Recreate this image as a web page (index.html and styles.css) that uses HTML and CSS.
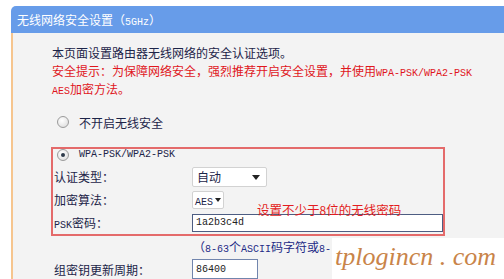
FILE: index.html
```html
<!DOCTYPE html>
<html lang="zh-CN">
<head>
  <meta charset="UTF-8">
  <title>无线网络安全设置</title>
  <link rel="stylesheet" href="styles.css">
</head>
<body>
  <div class="panel">
    <div class="panel-head">无线网络安全设置（<span class="en">5GHz</span>）</div>
    <div class="panel-body">
      <p class="intro">本页面设置路由器无线网络的安全认证选项。</p>
      <p class="warn">安全提示：为保障网络安全，强烈推荐开启安全设置，并使用<span class="en">WPA-PSK/WPA2-PSK</span><br><span class="en">AES</span>加密方法。</p>

      <div class="radio-row first"><span class="radio"></span>不开启无线安全</div>

      <div class="mark-box">
        <div class="radio-row"><span class="radio checked"></span><span class="en">WPA-PSK/WPA2-PSK</span></div>
        <div class="field">
          <span class="field-label">认证类型：</span>
          <span class="select wide">自动</span>
        </div>
        <div class="field">
          <span class="field-label">加密算法：</span>
          <span class="select narrow"><span class="en">AES</span></span>
        </div>
        <div class="field">
          <span class="field-label"><span class="en">PSK</span>密码：</span>
          <input class="text-input psk" type="text" value="1a2b3c4d">
        </div>
        <div class="note">设置不少于<span class="num">8</span>位的无线密码</div>
      </div>

      <div class="hint">（<span class="en">8-63</span>个<span class="en">ASCII</span>码字符或<span class="en">8-</span></div>
      <div class="field outer">
        <span class="field-label">组密钥更新周期：</span>
        <input class="text-input period" type="text" value="86400">
      </div>
    </div>
  </div>

  <div class="watermark">tplogincn . com</div>
</body>
</html>
```

FILE: styles.css
```css
html, body {
  margin: 0;
  padding: 0;
  background: #fff;
  overflow: hidden;
}

body {
  width: 504px;
  height: 279px;
  position: relative;
  font-family: "Noto Sans CJK SC", sans-serif;
  font-size: 12px;
  color: #1c2448;
}

.en {
  font-family: "Liberation Mono", monospace;
  font-size: 10px;
  line-height: 0;
}

.panel {
  margin: 6px 0 0 11px;
  width: 493px;
  height: 273px;
  overflow: hidden;
}

.panel-head {
  height: 27px;
  line-height: 27px;
  padding-left: 6px;
  background: #679ce9;
  color: #fff;
  border-radius: 5px 0 0 0;
}

.panel-body {
  background: #f3f3f3;
  border-left: 2px solid #f6c58e;
  padding: 11px 0 30px 39px;
  height: 300px;
}

.intro, .warn {
  margin: 0;
  line-height: 18px;
}

.warn {
  color: #e0161c;
}

.radio-row {
  display: flex;
  align-items: center;
  height: 12px;
  padding-left: 5px;
}

.radio-row.first {
  height: 18px;
  margin-top: 15px;
}

.radio {
  width: 10px;
  height: 10px;
  border: 1px solid #9b9b9b;
  border-radius: 50%;
  background: radial-gradient(circle at 40% 35%, #fff 0, #e4e4e4 70%, #cfcfcf 100%);
  margin-right: 10px;
  position: relative;
}

.radio.checked::after {
  content: "";
  position: absolute;
  left: 3px;
  top: 3px;
  width: 4px;
  height: 4px;
  border-radius: 50%;
  background: #2d3a4a;
}

.mark-box {
  position: relative;
  box-sizing: border-box;
  width: 394px;
  margin: 16px 0 0 -1px;
  padding: 0 0 0 1px;
  border: 2px solid #e46a6a;
}

.mark-box .radio-row {
  padding-left: 3px;
}

.field {
  display: flex;
  align-items: center;
  height: 23px;
}

.mark-box .field:nth-child(2) {
  margin-top: 4px;
}

.field.outer {
  padding-left: 2px;
  height: 22px;
  margin-top: 2px;
}

.field-label {
  width: 138px;
  flex: none;
}

.select {
  position: relative;
  box-sizing: border-box;
  background: #fff;
  border: 1px solid #d2d2d2;
  border-radius: 2px;
  padding-left: 4px;
}

.select::after {
  content: "";
  position: absolute;
  top: 50%;
  margin-top: -2px;
  border-left: 4px solid transparent;
  border-right: 4px solid transparent;
  border-top: 5px solid #222;
}

.select.wide {
  width: 75px;
  height: 20px;
  line-height: 18px;
}

.select.wide::after {
  right: 6px;
}

.select.narrow {
  width: 32px;
  height: 18px;
  line-height: 16px;
  padding-left: 2px;
}

.select.narrow::after {
  right: 2px;
  border-left-width: 3px;
  border-right-width: 3px;
  border-top-width: 4px;
}

.text-input {
  box-sizing: border-box;
  height: 18px;
  margin: 0;
  padding: 0 3px;
  border: 1px solid #4d5d82;
  background: #fff;
  font-family: "Liberation Mono", monospace;
  font-size: 10px;
  color: #222;
}

.psk {
  width: 251px;
}

.period {
  width: 66px;
  height: 20px;
  border-color: #7185ad;
}

.note {
  position: absolute;
  left: 204px;
  top: 53px;
  color: #e31c20;
  font-size: 12.5px;
  line-height: 16px;
}

.note .num {
  font-size: 12px;
}

.hint {
  margin: 2px 0 0 141px;
  line-height: 18px;
  color: #1d2a86;
}

.watermark {
  position: absolute;
  left: 332px;
  top: 238px;
  width: 172px;
  height: 41px;
  background: #fff;
  font-family: "Liberation Serif", serif;
  font-style: italic;
  font-size: 26px;
  line-height: 38px;
  color: #c98449;
  padding-left: 3px;
  box-sizing: border-box;
  white-space: nowrap;
}
```
